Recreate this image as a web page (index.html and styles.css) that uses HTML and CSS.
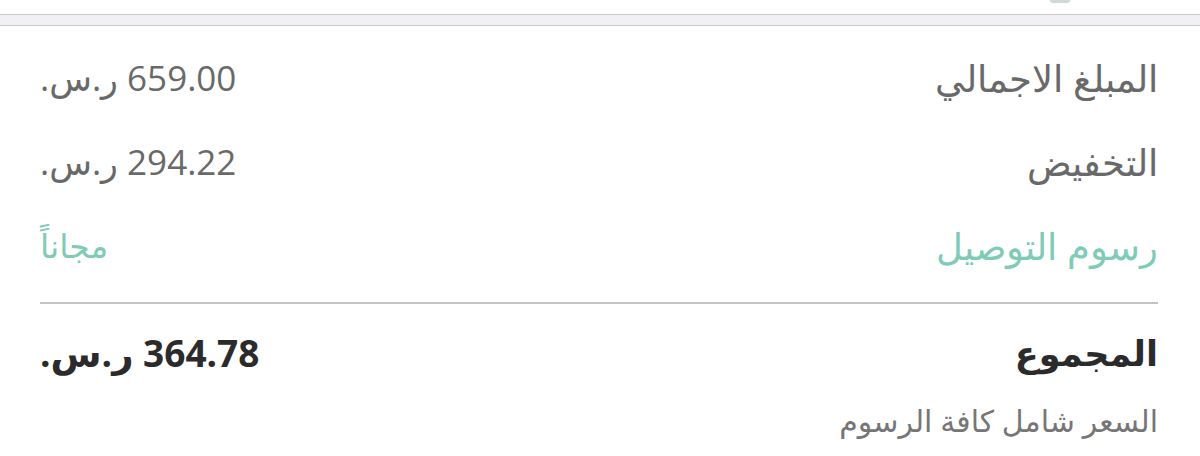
FILE: index.html
```html
<!DOCTYPE html>
<html lang="ar" dir="rtl">
<head>
    <meta charset="UTF-8">
    <meta name="viewport" content="width=device-width, initial-scale=1.0">
    <title>ملخص الطلب</title>
    <link rel="stylesheet" href="styles.css">
</head>
<body>
    <div class="top-strip">
        <span class="top-mark"></span>
    </div>
    <div class="separator"></div>

    <div class="summary">
        <div class="row">
            <span class="label">المبلغ الاجمالي</span>
            <span class="value">659.00 ر.س.</span>
        </div>
        <div class="row">
            <span class="label">التخفيض</span>
            <span class="value">294.22 ر.س.</span>
        </div>
        <div class="row delivery">
            <span class="label">رسوم التوصيل</span>
            <span class="value">مجاناً</span>
        </div>

        <div class="divider"></div>

        <div class="row total">
            <span class="label">المجموع</span>
            <span class="value">364.78 ر.س.</span>
        </div>
        <p class="note">السعر شامل كافة الرسوم</p>
    </div>
</body>
</html>
```

FILE: styles.css
```css
body {
    margin: 0;
    background-color: #ffffff;
    font-family: "Open Sans", "DejaVu Sans", sans-serif;
    color: #6b6b6b;
}
.top-strip {
    height: 14px;
    display: flex;
    padding-right: 130px;
}
.top-mark {
    width: 20px;
    height: 3px;
    border-radius: 0 0 10px 10px;
    background-color: #9fb8b1;
    opacity: 0.5;
}
.separator {
    height: 10px;
    background-color: #f1f1f5;
    border-top: 1px solid #c9c9cc;
    border-bottom: 1px solid #c9c9cc;
}
.summary {
    padding: 9px 42px 0 40px;
}
.row {
    display: flex;
    justify-content: space-between;
    align-items: center;
    height: 84px;
    font-size: 35px;
}
.row .label {
    font-size: 37px;
    font-weight: 300;
    color: #696969;
}
.row .value {
    color: #696969;
}
.delivery .label,
.delivery .value {
    color: #80cbb6;
}
.delivery .value {
    font-size: 33px;
}
.divider {
    height: 2px;
    background-color: #c4c4c4;
    margin: 15px 0 0 0;
}
.total {
    height: 96px;
    font-weight: bold;
    font-size: 37px;
}
.total .label {
    font-size: 35px;
    font-weight: bold;
}
.total .label,
.total .value {
    color: #2b2b2b;
}
.note {
    margin: 0;
    font-size: 30px;
    color: #767676;
}
```
